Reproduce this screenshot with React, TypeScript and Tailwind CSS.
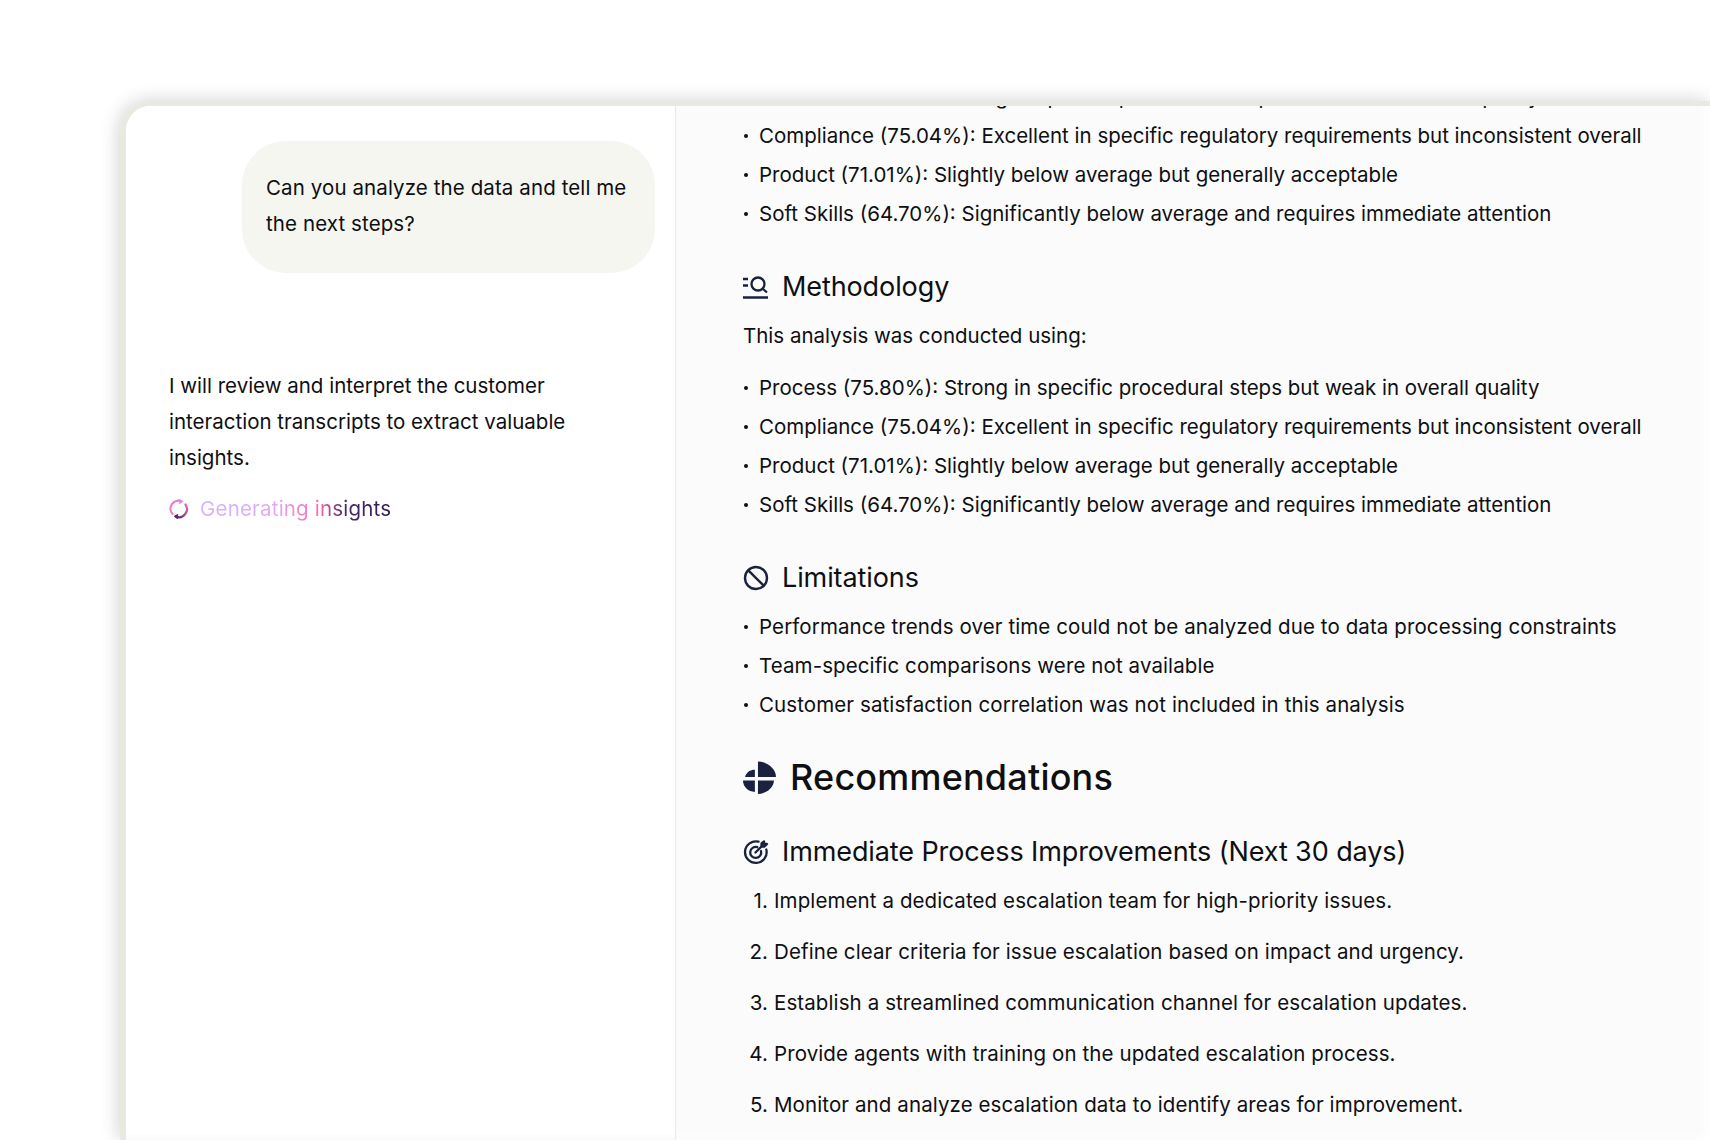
import React from "react";

const bullets = {
  process: "Process (75.80%): Strong in specific procedural steps but weak in overall quality",
  compliance: "Compliance (75.04%): Excellent in specific regulatory requirements but inconsistent overall",
  product: "Product (71.01%): Slightly below average but generally acceptable",
  soft: "Soft Skills (64.70%): Significantly below average and requires immediate attention",
};

function Bullets({ items, wide }: { items: string[]; wide?: boolean }) {
  return (
    <ul className={wide ? "flex flex-col tracking-[0.1px]" : "flex flex-col"}>
      {items.map((t) => (
        <li key={t} className="flex h-[39px] items-center text-[20.5px] leading-[39px] whitespace-nowrap">
          <span className="w-[16px] shrink-0">
            <span className="ml-[1px] block h-[4px] w-[4px] rounded-full bg-[#0e0f12]" />
          </span>
          {t}
        </li>
      ))}
    </ul>
  );
}

function MethodIcon() {
  return (
    <svg width="26" height="26" viewBox="0 0 26 26" fill="none" stroke="#1a2240" strokeWidth="2.300" strokeLinecap="butt">
      <path d="M0 5h5M0 11.500h5M0 23.500h25" />
      <circle cx="15" cy="10" r="6.500" />
      <path d="M19.500 14.500l4.500 4" />
    </svg>
  );
}

function BanIcon() {
  return (
    <svg width="26" height="26" viewBox="0 0 26 26" fill="none" stroke="#1a2240" strokeWidth="2.400">
      <circle cx="13" cy="13" r="11" />
      <path d="M5.300 5.300l15.400 15.400" />
    </svg>
  );
}

function PieIcon() {
  return (
    <svg width="33" height="33" viewBox="0 0 32 32" fill="#1a2240">
      <path d="M14.500.5C24 .5 32 8 32 15.500H14.500z" />
      <path d="M11.500 8.500V15.500H2C3 11 7 8.500 11.500 8.500z" />
      <path d="M0 19H11.500V30C5 30 0 25 0 19z" />
      <path d="M14.500 19H30C30 26 22 32 14.500 32z" />
    </svg>
  );
}

function GoalIcon() {
  return (
    <svg width="26" height="26" viewBox="0 0 26 26" fill="none" stroke="#1a2240" strokeWidth="2.300" strokeLinecap="round" strokeLinejoin="round">
      <path d="M15.500 2.700A10.800 10.800 0 1 0 23.300 10.500" />
      <path d="M14.300 8.200A5.500 5.500 0 1 0 18 12" />
      <path d="M12.500 13.500L20 6" />
      <path d="M18.500 4.500V7.500H21.500L24 5H21V2.500z" />
    </svg>
  );
}

function Spinner() {
  return (
    <svg width="20" height="20" viewBox="0 0 20 20" fill="none" strokeWidth="2.200" strokeLinecap="round" strokeLinejoin="round">
      <defs>
        <linearGradient id="g2" x1="1" y1="0" x2="0" y2="1">
          <stop offset="0" stopColor="#f06aae" />
          <stop offset="1" stopColor="#4c2a6a" />
        </linearGradient>
      </defs>
      <path d="M12.500 2.300A8 8 0 0 0 3.500 15" stroke="#f07fc0" />
      <path d="M10.500 .8L12.800 2.300L10.800 4.200" stroke="#d98fe8" strokeWidth="1.600" />
      <path d="M16.500 5.500A8 8 0 0 1 6.500 17.300" stroke="url(#g2)" />
      <path d="M8.500 15.800L6.200 17.400L8.300 19.200" stroke="#4c2a6a" strokeWidth="1.600" />
    </svg>
  );
}

function H3({ icon, children }: { icon: React.ReactNode; children: React.ReactNode }) {
  return (
    <h3 className="flex items-center gap-[13px] text-[27px] leading-[36px] tracking-[-0.1px] whitespace-nowrap">
      <span className="w-[26px] shrink-0">{icon}</span>
      {children}
    </h3>
  );
}

const steps = [
  "Implement a dedicated escalation team for high-priority issues.",
  "Define clear criteria for issue escalation based on impact and urgency.",
  "Establish a streamlined communication channel for escalation updates.",
  "Provide agents with training on the updated escalation process.",
  "Monitor and analyze escalation data to identify areas for improvement.",
];

export default function App() {
  return (
    <div className="h-[1140px] w-[1710px] overflow-hidden bg-white pt-[101px] pl-[120px] font-['Inter',sans-serif] text-[#0e0f12]">
      <div className="flex h-[1039px] w-[1590px] overflow-hidden rounded-tl-[30px] border-t-[5px] border-l-[6px] border-[#e8e9e1] shadow-[-2px_-1px_18px_rgba(0,0,0,0.17)]">
        <aside className="w-[550px] shrink-0 border-r border-[#e8e8e8] bg-white shadow-[inset_0_-8px_10px_-8px_#f4f4f4]">
          <div className="mt-[35px] ml-[116px] w-[413px] rounded-[44px] bg-[#f5f6ef] px-[24px] pt-[29px] pb-[31px] text-[20.5px] leading-[36px] tracking-[0.1px]">
            Can you analyze the data and tell me the next steps?
          </div>
          <p className="mt-[95px] ml-[43px] w-[440px] text-[20.5px] leading-[36px]">
            I will review and interpret the customer interaction transcripts to extract valuable insights.
          </p>
          <div className="mt-[15px] ml-[43px] flex items-center gap-[11px] text-[20.5px] leading-[36px] tracking-[0.2px]">
            <Spinner />
            <span className="bg-[linear-gradient(90deg,#d9b2fb_0%,#dfa9f5_40%,#fb6cb0_62%,#4c2a6a_75%,#2e1a55_100%)] bg-clip-text text-transparent">
              Generating insights
            </span>
          </div>
        </aside>
        <main className="flex-1 overflow-hidden bg-[#fbfbfb] pl-[67px] shadow-[inset_-14px_-10px_14px_-10px_#ffffff]">
          <div className="-mt-[29px]">
            <Bullets items={[bullets.process, bullets.compliance, bullets.product, bullets.soft]} />
            <div className="mt-[36px]">
              <H3 icon={<MethodIcon />}>Methodology</H3>
            </div>
            <p className="mt-[13px] text-[20.5px] leading-[36px]">This analysis was conducted using:</p>
            <div className="mt-[14px]">
              <Bullets items={[bullets.process, bullets.compliance, bullets.product, bullets.soft]} />
            </div>
            <div className="mt-[36px]">
              <H3 icon={<BanIcon />}>Limitations</H3>
            </div>
            <div className="mt-[11px]">
              <Bullets
                wide
                items={[
                  "Performance trends over time could not be analyzed due to data processing constraints",
                  "Team-specific comparisons were not available",
                  "Customer satisfaction correlation was not included in this analysis",
                ]}
              />
            </div>
            <h2 className="mt-[29px] flex items-center gap-[14px] text-[36px] leading-[48px] font-medium tracking-[0.2px] whitespace-nowrap">
              <PieIcon />
              Recommendations
            </h2>
            <div className="mt-[33px]">
              <H3 icon={<GoalIcon />}>Immediate Process Improvements (Next 30 days)</H3>
            </div>
            <ol className="mt-[6px] flex flex-col">
              {steps.map((s, i) => (
                <li key={s} className="flex h-[51px] items-center text-[20.5px] tracking-[0.1px] whitespace-nowrap">
                  <span className="w-[31px] shrink-0 pr-[6px] text-right">{i + 1}.</span>
                  {s}
                </li>
              ))}
            </ol>
          </div>
        </main>
      </div>
    </div>
  );
}
